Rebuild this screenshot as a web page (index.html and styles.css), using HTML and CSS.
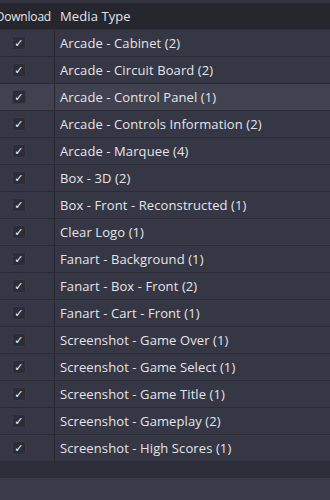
FILE: index.html
```html
<!DOCTYPE html>
<html lang="en">
<head>
  <meta charset="UTF-8" />
  <title>Media Types</title>
  <link rel="stylesheet" href="styles.css">
</head>
<body>
  <div class="grid">
    <div class="grid-head">
      <div class="col-dl"><span class="head-label">Download</span></div>
      <div class="col-type">Media Type</div>
    </div>
    <div class="grid-body">
      <div class="row"><div class="col-dl"><span class="check">&#10003;</span></div><div class="col-type">Arcade - Cabinet (2)</div></div>
      <div class="row"><div class="col-dl"><span class="check">&#10003;</span></div><div class="col-type">Arcade - Circuit Board (2)</div></div>
      <div class="row selected"><div class="col-dl"><span class="check">&#10003;</span></div><div class="col-type">Arcade - Control Panel (1)</div></div>
      <div class="row"><div class="col-dl"><span class="check">&#10003;</span></div><div class="col-type">Arcade - Controls Information (2)</div></div>
      <div class="row"><div class="col-dl"><span class="check">&#10003;</span></div><div class="col-type">Arcade - Marquee (4)</div></div>
      <div class="row"><div class="col-dl"><span class="check">&#10003;</span></div><div class="col-type">Box - 3D (2)</div></div>
      <div class="row"><div class="col-dl"><span class="check">&#10003;</span></div><div class="col-type">Box - Front - Reconstructed (1)</div></div>
      <div class="row"><div class="col-dl"><span class="check">&#10003;</span></div><div class="col-type">Clear Logo (1)</div></div>
      <div class="row"><div class="col-dl"><span class="check">&#10003;</span></div><div class="col-type">Fanart - Background (1)</div></div>
      <div class="row"><div class="col-dl"><span class="check">&#10003;</span></div><div class="col-type">Fanart - Box - Front (2)</div></div>
      <div class="row"><div class="col-dl"><span class="check">&#10003;</span></div><div class="col-type">Fanart - Cart - Front (1)</div></div>
      <div class="row"><div class="col-dl"><span class="check">&#10003;</span></div><div class="col-type">Screenshot - Game Over (1)</div></div>
      <div class="row"><div class="col-dl"><span class="check">&#10003;</span></div><div class="col-type">Screenshot - Game Select (1)</div></div>
      <div class="row"><div class="col-dl"><span class="check">&#10003;</span></div><div class="col-type">Screenshot - Game Title (1)</div></div>
      <div class="row"><div class="col-dl"><span class="check">&#10003;</span></div><div class="col-type">Screenshot - Gameplay (2)</div></div>
      <div class="row"><div class="col-dl"><span class="check">&#10003;</span></div><div class="col-type">Screenshot - High Scores (1)</div></div>
    </div>
    <div class="grid-foot"></div>
  </div>
  <div class="bottom-bar"></div>
</body>
</html>
```

FILE: styles.css
```css
* {
  box-sizing: border-box;
}

body {
  margin: 0;
  background-color: #2d2e3a;
  font-family: 'Open Sans', 'Noto Sans', sans-serif;
  font-size: 13px;
  letter-spacing: 0.1px;
  color: #e4e4e8;
  height: 500px;
  display: flex;
  flex-direction: column;
  overflow: hidden;
}

.grid {
  flex: 1;
  display: flex;
  flex-direction: column;
  border-top: 3px solid #32333f;
}

.grid-head {
  display: flex;
  height: 27px;
  background-color: #25262e;
  border-bottom: 1px solid #2b2c36;
}

.col-dl {
  width: 55px;
  flex-shrink: 0;
  display: flex;
  align-items: center;
  padding-left: 12px;
  border-right: 1px solid #272832;
  overflow: hidden;
  white-space: nowrap;
}

.grid-head .col-dl {
  padding-left: 0;
  padding-right: 3px;
  justify-content: flex-end;
}

.head-label {
  font-size: 12px;
  letter-spacing: -0.2px;
  flex-shrink: 0;
}

.col-type {
  flex: 1;
  display: flex;
  align-items: center;
  padding-left: 5px;
  white-space: nowrap;
}

.row {
  display: flex;
  height: 27px;
  background-color: #363745;
  border-bottom: 1px solid #2a2b35;
}

.row.selected {
  background-color: #41424f;
}

.check {
  width: 14px;
  height: 14px;
  background-color: #2c2d39;
  border: 1px solid #3a3b48;
  border-radius: 2px;
  display: flex;
  align-items: center;
  justify-content: center;
  font-family: 'DejaVu Sans', sans-serif;
  font-size: 11px;
  line-height: 1;
  color: #f4f4f4;
}

.grid-foot {
  flex: 1;
}

.bottom-bar {
  height: 22px;
  background-color: #3a3b48;
}
```
